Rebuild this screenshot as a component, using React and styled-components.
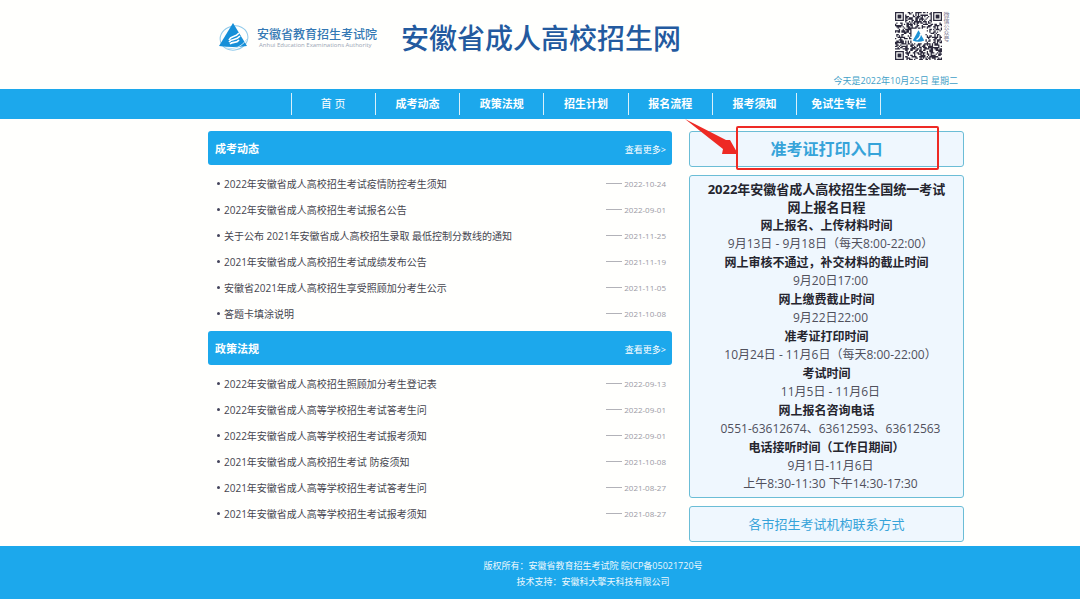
import React from "react";
import styled, { createGlobalStyle } from "styled-components";

const BLUE = "#1ca8ec";

const Global = createGlobalStyle`
  * { box-sizing: border-box; }
  body {
    margin: 0;
    background: #fffffd;
    color: #45454f;
    font-family: "Open Sans", "Noto Sans CJK SC", sans-serif;
    font-size: 10px;
  }
  a { color: inherit; text-decoration: none; }
  h1, h2, p, ul, dl, dd, dt { margin: 0; padding: 0; }
  ul { list-style: none; }
`;

const Inner = styled.div`
  padding-left: 208px;
  padding-right: 116px;
`;

const Header = styled(Inner)`
  display: flex;
  justify-content: space-between;
  align-items: flex-start;
  height: 89px;
`;

const Brand = styled.div`
  display: flex;
  align-items: center;
  padding: 18px 0 0 10px;
`;

const Org = styled.div`
  margin-top: 2px;
  margin-left: 7px;
  width: 124px;
  color: #3478b4;
  font-family: "Noto Sans CJK SC", sans-serif;
  font-size: 12px;
  font-weight: 500;
  line-height: 14px;
  white-space: nowrap;
`;

const OrgEn = styled.div`
  padding-left: 2px;
  color: #9aa5b4;
  font-family: "Open Sans", sans-serif;
  font-size: 6px;
  font-weight: 400;
  line-height: 8px;
`;

const SiteName = styled.h1`
  margin-left: 20px;
  color: #235a9f;
  font-family: "Noto Sans CJK SC", sans-serif;
  font-size: 28px;
  font-weight: 500;
  line-height: 38px;
  white-space: nowrap;
`;

const HeaderSide = styled.div`
  display: flex;
  flex-direction: column;
  align-items: flex-end;
  padding: 12px 6px 0 0;
`;

const QrRow = styled.div`
  display: flex;
  padding-right: 9px;
`;

const QrLabel = styled.span`
  width: 7px;
  color: #77738c;
  font-size: 6px;
  line-height: 7px;
  writing-mode: vertical-rl;
`;

const Today = styled.p`
  margin-top: 15px;
  color: #3f9fc8;
  font-size: 9px;
  line-height: 12px;
`;

const NavBar = styled.nav`
  background: ${BLUE};
`;

const NavList = styled.ul`
  display: flex;
  max-width: 591px;
  height: 30px;
  margin: 0 auto;
  padding: 4px 0;
`;

const NavItem = styled.li`
  flex: 1;
  border-left: 1px solid #d9f0fa;
  &:last-child { border-right: 1px solid #d9f0fa; }
`;

const NavLink = styled.a`
  display: block;
  color: #fff;
  font-size: 11px;
  font-weight: ${(p) => (p.$current ? 400 : 700)};
  line-height: 22px;
  text-align: center;
`;

const Main = styled(Inner)`
  display: grid;
  grid-template-columns: 1fr 275px;
  column-gap: 17px;
  padding-top: 12px;
  padding-bottom: 4px;
`;

const SectionHead = styled.div`
  display: flex;
  justify-content: space-between;
  align-items: center;
  height: 34px;
  padding: 0 6px 0 7px;
  border-radius: 3px;
  background: ${BLUE};
  color: #fff;
`;

const SectionTitle = styled.h2`
  font-size: 11px;
  font-weight: 700;
`;

const More = styled.a`
  padding-top: 2px;
  font-size: 9px;
`;

const NewsList = styled.ul`
  padding: 5px 6px 5px 9px;
`;

const NewsRow = styled.li`
  display: flex;
  align-items: center;
  height: 26px;
  &::before {
    content: "";
    width: 3px;
    height: 3px;
    margin-right: 4px;
    border-radius: 50%;
    background: #45455c;
  }
`;

const NewsLink = styled.a`
  flex: 1;
`;

const NewsDate = styled.time`
  display: flex;
  align-items: center;
  gap: 2px;
  color: #9a9aa4;
  font-size: 8px;
  &::before {
    content: "";
    width: 16px;
    height: 1px;
    background: #b2b2b8;
  }
`;

const Side = styled.aside`
  display: flex;
  flex-direction: column;
  gap: 8px;
`;

const Panel = styled.div`
  border: 1px solid #6bbdd6;
  border-radius: 3px;
  background: #eff7fe;
  text-align: center;
`;

const EntryWrap = styled.div`
  position: relative;
`;

const PanelLink = styled(Panel).attrs({ as: "a", href: "#" })`
  display: block;
  color: #36a3d9;
  font-size: ${(p) => (p.$strong ? 16 : 13)}px;
  font-weight: ${(p) => (p.$strong ? 700 : 400)};
  line-height: 34px;
`;

const Highlight = styled.span`
  position: absolute;
  top: -5px;
  left: 47px;
  width: 203px;
  height: 44px;
  border: 2px solid #ee2a24;
  border-radius: 2px;
  pointer-events: none;
`;

const Arrow = styled.svg`
  position: absolute;
  top: -13px;
  left: -4px;
  pointer-events: none;
`;

const Schedule = styled(Panel).attrs({ as: "dl" })`
  padding: 4px 0;
`;

const Term = styled.dt`
  color: #25252e;
  font-size: ${(p) => (p.$title ? 13 : 12)}px;
  font-weight: 700;
  line-height: ${(p) => (p.$title ? 18 : 19)}px;
`;

const Detail = styled.dd`
  padding-left: 8px;
  color: #50505c;
  font-size: 12px;
  line-height: 18px;
`;

const Footer = styled.footer`
  padding: 12px 0 10px 106px;
  background: ${BLUE};
  color: #eef8fc;
  font-size: 9px;
  line-height: 16px;
  text-align: center;
`;

function Logo() {
  return (
    <svg width="32" height="30" viewBox="0 0 32 30" aria-hidden="true">
      <ellipse cx="16" cy="16" rx="14" ry="12" fill="none" stroke="#8fc9ea" transform="rotate(-15 16 16)" />
      <path d="M15 1 L29 24 Q15 26 1 24 Z" fill="#168fd8" />
      <path d="M11 18 C13 13 17 16 21 11 M11 20 C14 16 18 19 22 14 M12 22 C15 19 18 22 21 18" fill="none" stroke="#fff" strokeWidth="1.600" />
      <path d="M8 26 Q21 29 29 17" fill="none" stroke="#bfe2f5" strokeWidth="1" />
    </svg>
  );
}

const QR_SIZE = 37;

function buildModules() {
  let path = "";
  let seed = 20221;
  for (let y = 0; y < QR_SIZE; y++) {
    for (let x = 0; x < QR_SIZE; x++) {
      seed = (seed * 1103515245 + 12345) % 2147483648;
      const corner = (x < 8 && y < 8) || (x > 28 && y < 8) || (x < 8 && y > 28);
      const middle = x > 12 && x < 24 && y > 12 && y < 24;
      if (!corner && !middle && seed / 2147483648 < 0.52) path += `M${x} ${y}h1v1h-1z`;
    }
  }
  return path;
}

const MODULES = buildModules();

function QrCode() {
  return (
    <svg width="47" height="48" viewBox="0 0 37 37" preserveAspectRatio="none" role="img" aria-label="微信公众号二维码">
      <path d={MODULES} fill="#2b293c" />
      {[[0, 0], [30, 0], [0, 30]].map(([x, y]) => (
        <g key={`${x}-${y}`} fill="#2b293c">
          <path fillRule="evenodd" d={`M${x} ${y}h7v7h-7z M${x + 1} ${y + 1}v5h5v-5z`} />
          <rect x={x + 2} y={y + 2} width="3" height="3" />
        </g>
      ))}
      <path d="M18.500 14 L23 22 Q18.500 24 14 22 Z" fill="#1d93d6" />
      <path d="M17 21.500 Q20 20 20 17" fill="none" stroke="#fff" strokeWidth="1" />
    </svg>
  );
}

const NAV = ["首 页", "成考动态", "政策法规", "招生计划", "报名流程", "报考须知", "免试生专栏"];

const SECTIONS = [
  {
    title: "成考动态",
    items: [
      ["2022年安徽省成人高校招生考试疫情防控考生须知", "2022-10-24"],
      ["2022年安徽省成人高校招生考试报名公告", "2022-09-01"],
      ["关于公布 2021年安徽省成人高校招生录取 最低控制分数线的通知", "2021-11-25"],
      ["2021年安徽省成人高校招生考试成绩发布公告", "2021-11-19"],
      ["安徽省2021年成人高校招生享受照顾加分考生公示", "2021-11-05"],
      ["答题卡填涂说明", "2021-10-08"],
    ],
  },
  {
    title: "政策法规",
    items: [
      ["2022年安徽省成人高校招生照顾加分考生登记表", "2022-09-13"],
      ["2022年安徽省成人高等学校招生考试答考生问", "2022-09-01"],
      ["2022年安徽省成人高等学校招生考试报考须知", "2022-09-01"],
      ["2021年安徽省成人高校招生考试 防疫须知", "2021-10-08"],
      ["2021年安徽省成人高等学校招生考试答考生问", "2021-08-27"],
      ["2021年安徽省成人高等学校招生考试报考须知", "2021-08-27"],
    ],
  },
];

const SCHEDULE = [
  [["2022年安徽省成人高校招生全国统一考试", "网上报名日程"], []],
  [["网上报名、上传材料时间"], ["9月13日 - 9月18日（每天8:00-22:00）"]],
  [["网上审核不通过，补交材料的截止时间"], ["9月20日17:00"]],
  [["网上缴费截止时间"], ["9月22日22:00"]],
  [["准考证打印时间"], ["10月24日 - 11月6日（每天8:00-22:00）"]],
  [["考试时间"], ["11月5日 - 11月6日"]],
  [["网上报名咨询电话"], ["0551-63612674、63612593、63612563"]],
  [["电话接听时间（工作日期间）"], ["9月1日-11月6日", "上午8:30-11:30 下午14:30-17:30"]],
];

export default function App() {
  return (
    <>
      <Global />
      <Header as="header">
        <Brand>
          <Logo />
          <Org>
            安徽省教育招生考试院
            <OrgEn>Anhui Education Examinations Authority</OrgEn>
          </Org>
          <SiteName>安徽省成人高校招生网</SiteName>
        </Brand>
        <HeaderSide>
          <QrRow>
            <QrCode />
            <QrLabel>微信公众号</QrLabel>
          </QrRow>
          <Today>今天是2022年10月25日 星期二</Today>
        </HeaderSide>
      </Header>

      <NavBar>
        <Inner>
          <NavList>
            {NAV.map((label, i) => (
              <NavItem key={label}>
                <NavLink href="#" $current={i === 0}>{label}</NavLink>
              </NavItem>
            ))}
          </NavList>
        </Inner>
      </NavBar>

      <Main as="main">
        <div>
          {SECTIONS.map((section) => (
            <section key={section.title}>
              <SectionHead>
                <SectionTitle>{section.title}</SectionTitle>
                <More href="#">查看更多&gt;</More>
              </SectionHead>
              <NewsList>
                {section.items.map(([title, date]) => (
                  <NewsRow key={title}>
                    <NewsLink href="#">{title}</NewsLink>
                    <NewsDate>{date}</NewsDate>
                  </NewsRow>
                ))}
              </NewsList>
            </section>
          ))}
        </div>
        <Side>
          <EntryWrap>
            <PanelLink $strong>准考证打印入口</PanelLink>
            <Highlight />
            <Arrow width="54" height="38" viewBox="0 0 54 38" aria-hidden="true">
              <path d="M0 1 L41 22 L45 22 L53 36 L37 36 L38 31 L24 20 Z" fill="#ee2a24" />
            </Arrow>
          </EntryWrap>
          <Schedule>
            {SCHEDULE.map(([terms, details]) => (
              <React.Fragment key={terms[0]}>
                {terms.map((t) => <Term key={t} $title={details.length === 0}>{t}</Term>)}
                {details.map((d) => <Detail key={d}>{d}</Detail>)}
              </React.Fragment>
            ))}
          </Schedule>
          <PanelLink>各市招生考试机构联系方式</PanelLink>
        </Side>
      </Main>

      <Footer>
        <p>版权所有：安徽省教育招生考试院 皖ICP备05021720号</p>
        <p>技术支持：安徽科大擎天科技有限公司</p>
      </Footer>
    </>
  );
}
